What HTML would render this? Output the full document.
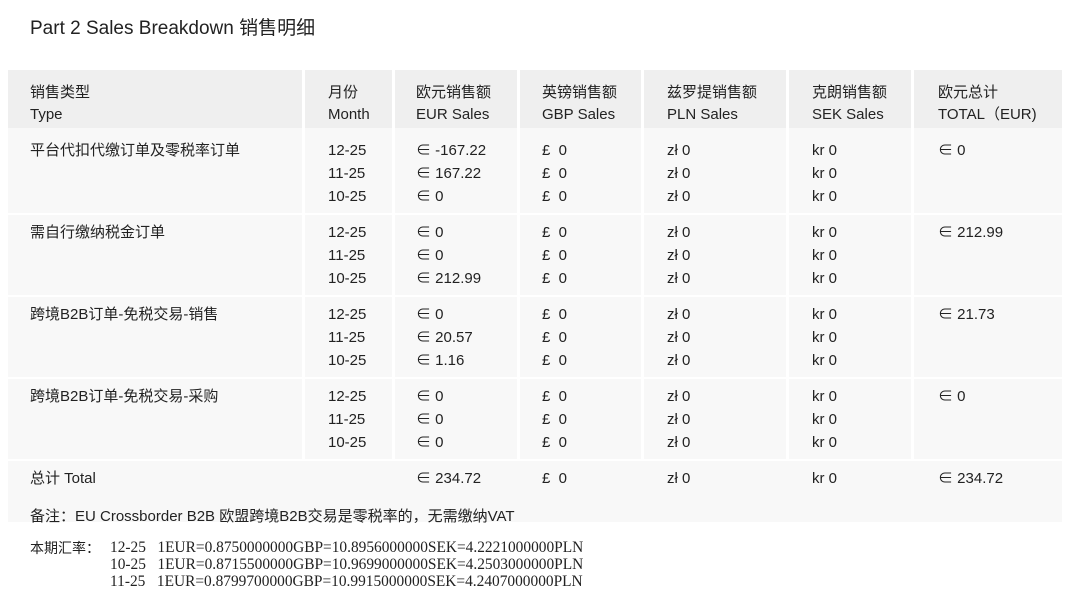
<!DOCTYPE html>
<html><head><meta charset="utf-8"><style>
body{margin:0;width:1080px;height:605px;background:#fff;position:relative;overflow:hidden;font-family:"Liberation Sans","Noto Sans CJK SC",sans-serif;color:#222;}
.a{position:absolute;white-space:nowrap;font-size:15px;line-height:18px;}
.bg{position:absolute;}
.s{font-family:"Liberation Serif","Noto Serif CJK SC",serif;font-size:15.4px;}
.t{margin-top:2px}
</style></head><body>
<div class="a" style="left:30px;top:18px;font-size:19px;line-height:22px;">Part 2 Sales Breakdown 销售明细</div>

<div class="bg" style="left:8px;top:70px;width:1054px;height:452px;background:#f8f8f8;"></div>
<div class="bg" style="left:8px;top:70px;width:1054px;height:58px;background:#efefef;"></div>
<div class="bg" style="left:302px;top:70px;width:3px;height:390px;background:#fff;"></div>
<div class="bg" style="left:392px;top:70px;width:3px;height:390px;background:#fff;"></div>
<div class="bg" style="left:517px;top:70px;width:3px;height:390px;background:#fff;"></div>
<div class="bg" style="left:641px;top:70px;width:3px;height:390px;background:#fff;"></div>
<div class="bg" style="left:786px;top:70px;width:3px;height:390px;background:#fff;"></div>
<div class="bg" style="left:911px;top:70px;width:3px;height:390px;background:#fff;"></div>
<div class="bg" style="left:8px;top:213px;width:1054px;height:2px;background:#fff;"></div>
<div class="bg" style="left:8px;top:295px;width:1054px;height:2px;background:#fff;"></div>
<div class="bg" style="left:8px;top:377px;width:1054px;height:2px;background:#fff;"></div>
<div class="bg" style="left:8px;top:459px;width:1054px;height:2px;background:#fff;"></div>

<div style="position:absolute;left:0;top:2px;width:1080px;height:520px;">
<div class="a" style="left:30px;top:82px;">销售类型</div><div class="a" style="left:30px;top:104px;">Type</div>
<div class="a" style="left:328px;top:82px;">月份</div><div class="a" style="left:328px;top:104px;">Month</div>
<div class="a" style="left:416px;top:82px;">欧元销售额</div><div class="a" style="left:416px;top:104px;">EUR Sales</div>
<div class="a" style="left:542px;top:82px;">英镑销售额</div><div class="a" style="left:542px;top:104px;">GBP Sales</div>
<div class="a" style="left:667px;top:82px;">兹罗提销售额</div><div class="a" style="left:667px;top:104px;">PLN Sales</div>
<div class="a" style="left:812px;top:82px;">克朗销售额</div><div class="a" style="left:812px;top:104px;">SEK Sales</div>
<div class="a" style="left:938px;top:82px;">欧元总计</div><div class="a" style="left:938px;top:104px;">TOTAL（EUR)</div>

<div class="a" style="left:30px;top:140px;">平台代扣代缴订单及零税率订单</div>
<div class="a" style="left:328px;top:140px;">12-25</div><div class="a" style="left:328px;top:163px;">11-25</div><div class="a" style="left:328px;top:186px;">10-25</div>
<div class="a" style="left:416px;top:140px;">∈ -167.22</div><div class="a" style="left:416px;top:163px;">∈ 167.22</div><div class="a" style="left:416px;top:186px;">∈ 0</div>
<div class="a" style="left:542px;top:140px;">£&nbsp; 0</div><div class="a" style="left:542px;top:163px;">£&nbsp; 0</div><div class="a" style="left:542px;top:186px;">£&nbsp; 0</div>
<div class="a" style="left:667px;top:140px;">zł 0</div><div class="a" style="left:667px;top:163px;">zł 0</div><div class="a" style="left:667px;top:186px;">zł 0</div>
<div class="a" style="left:812px;top:140px;">kr 0</div><div class="a" style="left:812px;top:163px;">kr 0</div><div class="a" style="left:812px;top:186px;">kr 0</div>
<div class="a" style="left:938px;top:140px;">∈ 0</div>

<div class="a" style="left:30px;top:222px;">需自行缴纳税金订单</div>
<div class="a" style="left:328px;top:222px;">12-25</div><div class="a" style="left:328px;top:245px;">11-25</div><div class="a" style="left:328px;top:268px;">10-25</div>
<div class="a" style="left:416px;top:222px;">∈ 0</div><div class="a" style="left:416px;top:245px;">∈ 0</div><div class="a" style="left:416px;top:268px;">∈ 212.99</div>
<div class="a" style="left:542px;top:222px;">£&nbsp; 0</div><div class="a" style="left:542px;top:245px;">£&nbsp; 0</div><div class="a" style="left:542px;top:268px;">£&nbsp; 0</div>
<div class="a" style="left:667px;top:222px;">zł 0</div><div class="a" style="left:667px;top:245px;">zł 0</div><div class="a" style="left:667px;top:268px;">zł 0</div>
<div class="a" style="left:812px;top:222px;">kr 0</div><div class="a" style="left:812px;top:245px;">kr 0</div><div class="a" style="left:812px;top:268px;">kr 0</div>
<div class="a" style="left:938px;top:222px;">∈ 212.99</div>

<div class="a" style="left:30px;top:304px;">跨境B2B订单-免税交易-销售</div>
<div class="a" style="left:328px;top:304px;">12-25</div><div class="a" style="left:328px;top:327px;">11-25</div><div class="a" style="left:328px;top:350px;">10-25</div>
<div class="a" style="left:416px;top:304px;">∈ 0</div><div class="a" style="left:416px;top:327px;">∈ 20.57</div><div class="a" style="left:416px;top:350px;">∈ 1.16</div>
<div class="a" style="left:542px;top:304px;">£&nbsp; 0</div><div class="a" style="left:542px;top:327px;">£&nbsp; 0</div><div class="a" style="left:542px;top:350px;">£&nbsp; 0</div>
<div class="a" style="left:667px;top:304px;">zł 0</div><div class="a" style="left:667px;top:327px;">zł 0</div><div class="a" style="left:667px;top:350px;">zł 0</div>
<div class="a" style="left:812px;top:304px;">kr 0</div><div class="a" style="left:812px;top:327px;">kr 0</div><div class="a" style="left:812px;top:350px;">kr 0</div>
<div class="a" style="left:938px;top:304px;">∈ 21.73</div>

<div class="a" style="left:30px;top:386px;">跨境B2B订单-免税交易-采购</div>
<div class="a" style="left:328px;top:386px;">12-25</div><div class="a" style="left:328px;top:409px;">11-25</div><div class="a" style="left:328px;top:432px;">10-25</div>
<div class="a" style="left:416px;top:386px;">∈ 0</div><div class="a" style="left:416px;top:409px;">∈ 0</div><div class="a" style="left:416px;top:432px;">∈ 0</div>
<div class="a" style="left:542px;top:386px;">£&nbsp; 0</div><div class="a" style="left:542px;top:409px;">£&nbsp; 0</div><div class="a" style="left:542px;top:432px;">£&nbsp; 0</div>
<div class="a" style="left:667px;top:386px;">zł 0</div><div class="a" style="left:667px;top:409px;">zł 0</div><div class="a" style="left:667px;top:432px;">zł 0</div>
<div class="a" style="left:812px;top:386px;">kr 0</div><div class="a" style="left:812px;top:409px;">kr 0</div><div class="a" style="left:812px;top:432px;">kr 0</div>
<div class="a" style="left:938px;top:386px;">∈ 0</div>

<div class="a" style="left:30px;top:468px;">总计 Total</div>
<div class="a" style="left:416px;top:468px;">∈ 234.72</div>
<div class="a" style="left:542px;top:468px;">£&nbsp; 0</div>
<div class="a" style="left:667px;top:468px;">zł 0</div>
<div class="a" style="left:812px;top:468px;">kr 0</div>
<div class="a" style="left:938px;top:468px;">∈ 234.72</div>

<div class="a" style="left:30px;top:506px;">备注：EU Crossborder B2B 欧盟跨境B2B交易是零税率的，无需缴纳VAT</div>
</div>

<div class="a" style="left:30px;top:539px;font-size:14px;">本期汇率：</div>
<div class="a s" style="left:110px;top:539px;">12-25&nbsp;&nbsp;&nbsp;1EUR=0.8750000000GBP=10.8956000000SEK=4.2221000000PLN</div>
<div class="a s" style="left:110px;top:556px;">10-25&nbsp;&nbsp;&nbsp;1EUR=0.8715500000GBP=10.9699000000SEK=4.2503000000PLN</div>
<div class="a s" style="left:110px;top:573px;">11-25&nbsp;&nbsp;&nbsp;1EUR=0.8799700000GBP=10.9915000000SEK=4.2407000000PLN</div>
</body></html>
